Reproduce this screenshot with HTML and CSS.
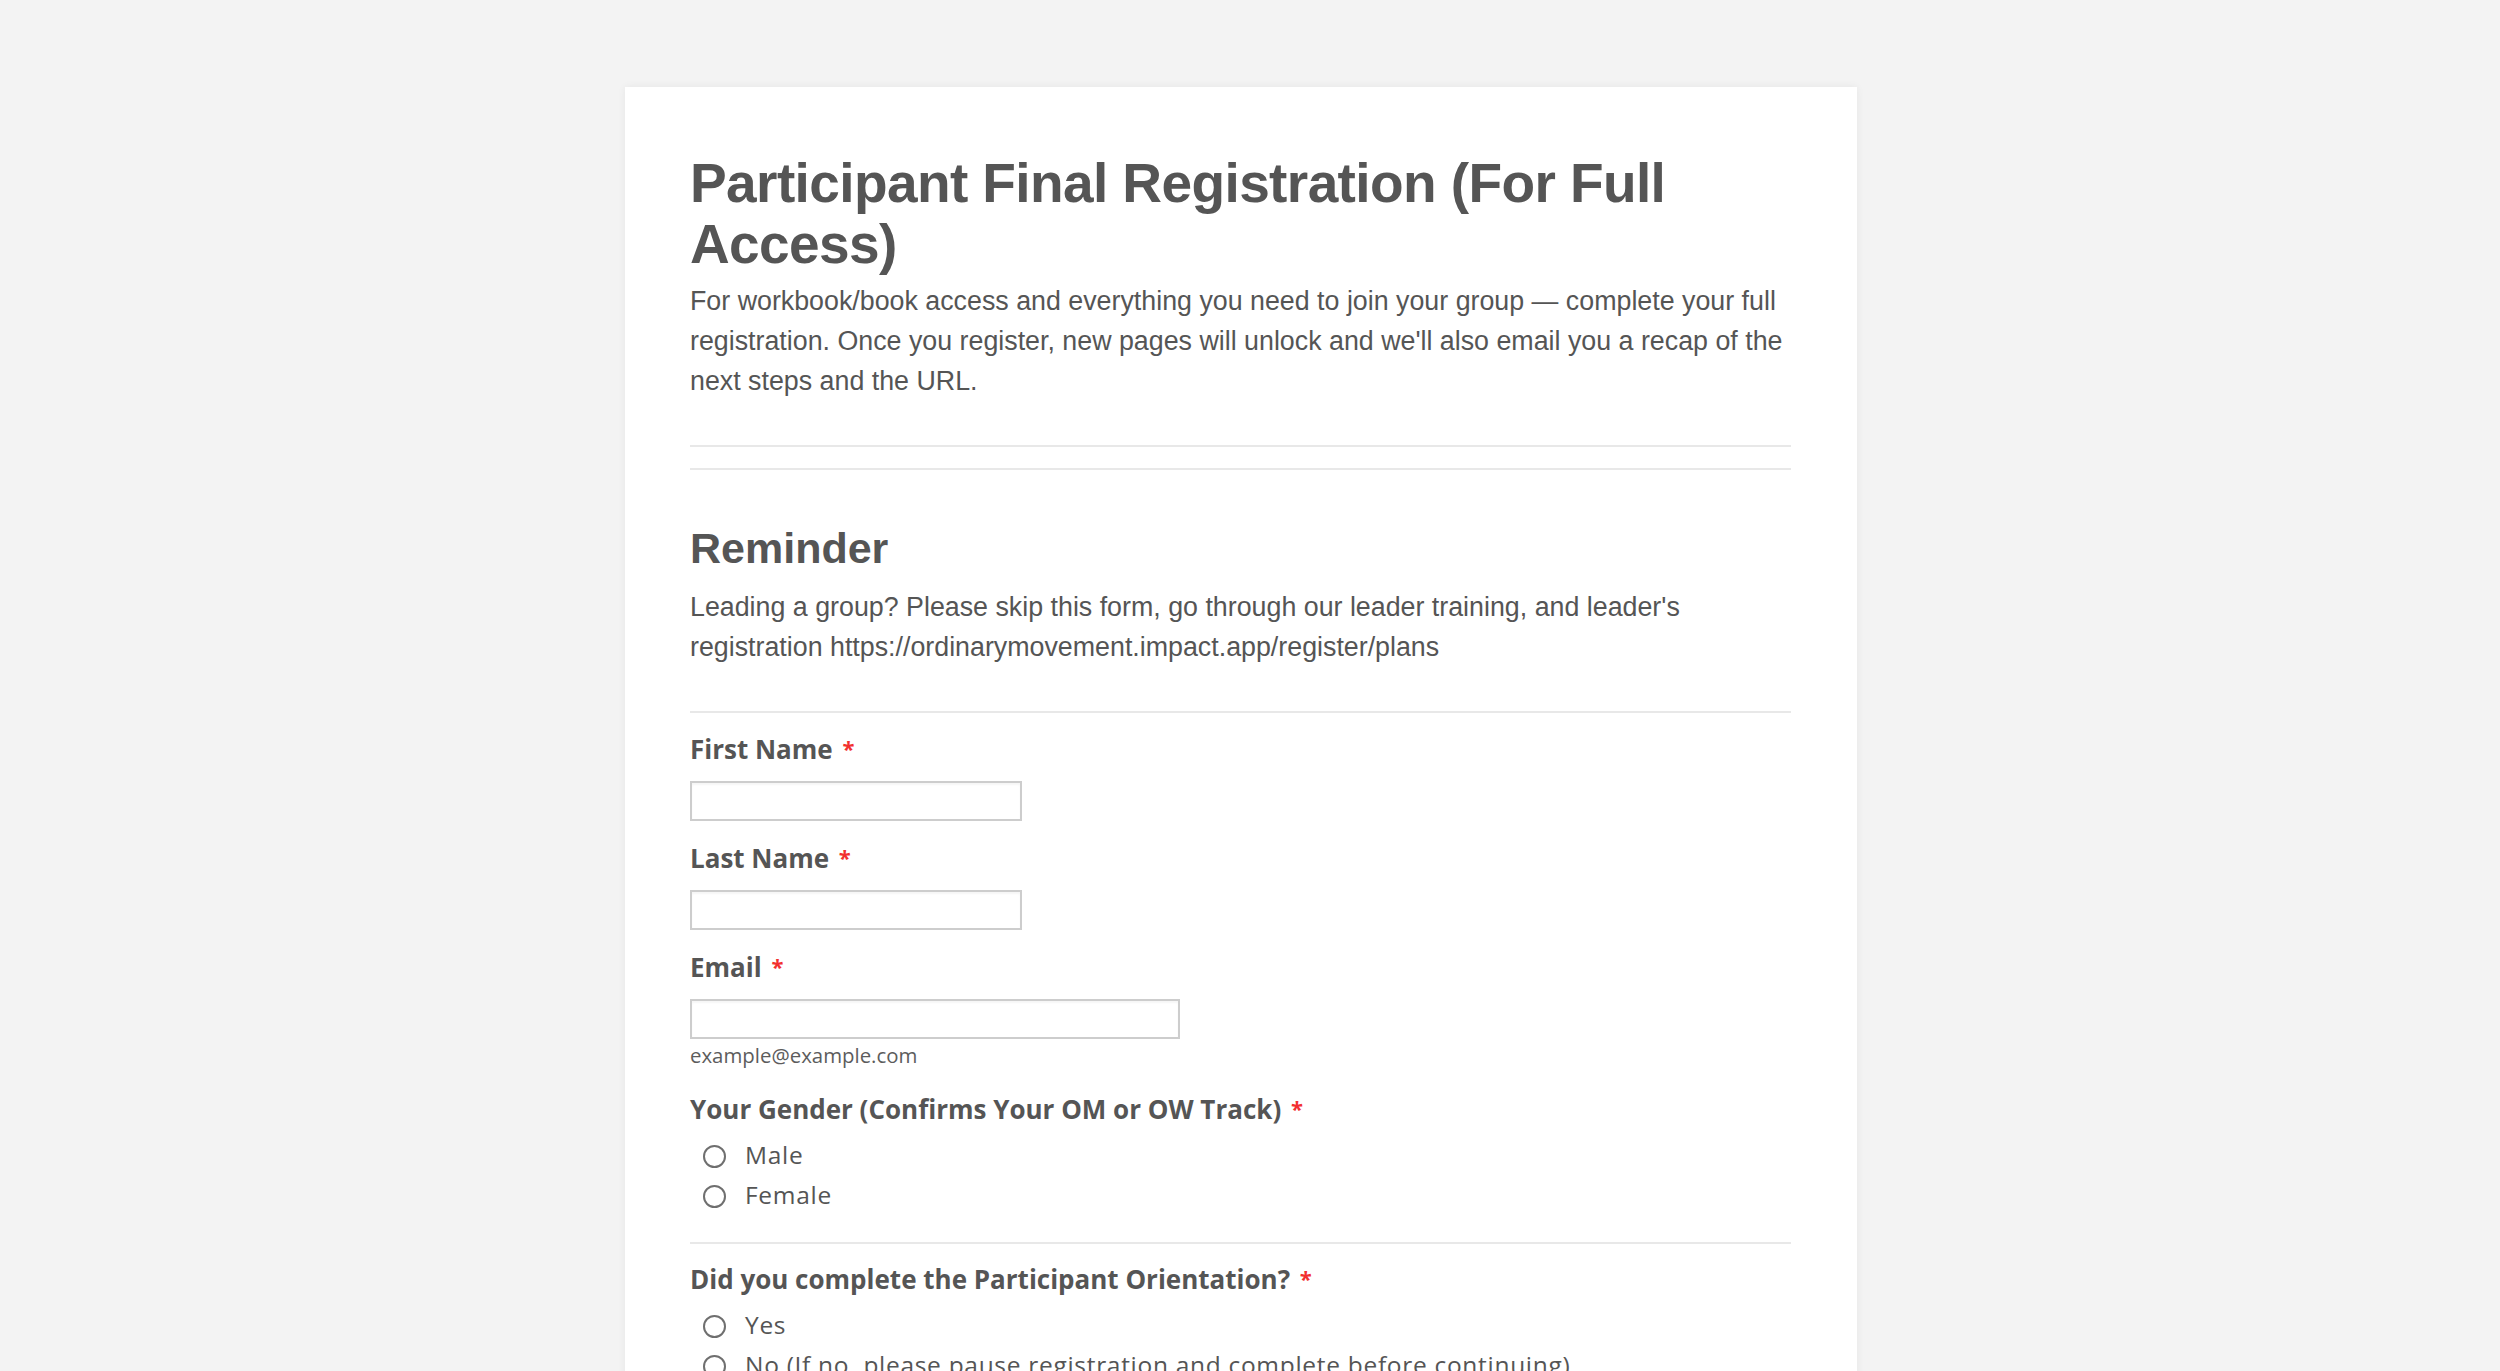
FILE: index.html
```html
<!DOCTYPE html>
<html lang="en">
<head>
<meta charset="utf-8">
<title>Participant Final Registration (For Full Access)</title>
<link rel="stylesheet" href="styles.css">
</head>
<body>
<form class="form-card">
  <header class="form-header">
    <h1 class="form-title">Participant Final Registration (For Full Access)</h1>
    <p class="form-desc">For workbook/book access and everything you need to join your group — complete your full registration. Once you register, new pages will unlock and we'll also email you a recap of the next steps and the URL.</p>
  </header>

  <section class="notice">
    <h2 class="notice-title">Reminder</h2>
    <p class="notice-text">Leading a group? Please skip this form, go through our leader training, and leader's registration https://ordinarymovement.impact.app/register/plans</p>
  </section>

  <div class="field">
    <label class="field-label" for="first">First Name <span class="req">*</span></label>
    <input class="text-input" id="first" type="text">
  </div>

  <div class="field">
    <label class="field-label" for="last">Last Name <span class="req">*</span></label>
    <input class="text-input" id="last" type="text">
  </div>

  <div class="field">
    <label class="field-label" for="email">Email <span class="req">*</span></label>
    <input class="text-input text-input-wide" id="email" type="email">
    <div class="hint">example@example.com</div>
  </div>

  <div class="field field-choice">
    <div class="field-label">Your Gender (Confirms Your OM or OW Track) <span class="req">*</span></div>
    <div class="options">
      <label class="option"><input class="radio" type="radio" name="gender"><span class="option-text">Male</span></label>
      <label class="option"><input class="radio" type="radio" name="gender"><span class="option-text">Female</span></label>
    </div>
  </div>

  <div class="field field-choice field-after-choice">
    <div class="field-label">Did you complete the Participant Orientation? <span class="req">*</span></div>
    <div class="options">
      <label class="option"><input class="radio" type="radio" name="orient"><span class="option-text">Yes</span></label>
      <label class="option"><input class="radio" type="radio" name="orient"><span class="option-text">No (If no, please pause registration and complete before continuing)</span></label>
    </div>
  </div>
</form>
</body>
</html>
```
FILE: styles.css
```css
html, body {
  margin: 0;
  padding: 0;
  background: #f3f3f3;
}

body {
  font-family: "Liberation Sans", Arial, sans-serif;
  color: #555555;
  overflow: hidden;
}

.form-card {
  box-sizing: border-box;
  width: 1232px;
  margin: 87px 0 0 625px;
  padding: 66px 66px 60px 65px;
  background: #ffffff;
  box-shadow: 0 0 8px rgba(0, 0, 0, 0.06);
  min-height: 1400px;
}

.form-header {
  padding-bottom: 44px;
  border-bottom: 2px solid #e8e8e8;
}

.form-title {
  margin: 0;
  font-family: "Liberation Sans", Arial, sans-serif;
  font-weight: 700;
  font-size: 55px;
  line-height: 61px;
  letter-spacing: -0.6px;
  color: #555555;
}

.form-desc {
  margin: 6px 0 0;
  font-size: 26.8px;
  line-height: 40px;
  color: #555555;
}

.notice {
  margin-top: 21px;
  padding: 52px 0 44px;
  border-top: 2px solid #e8e8e8;
  border-bottom: 2px solid #e8e8e8;
}

.notice-title {
  margin: 0;
  font-weight: 700;
  font-size: 43px;
  line-height: 52px;
  color: #555555;
}

.notice-text {
  margin: 13px 0 0;
  font-size: 26.8px;
  line-height: 40px;
  color: #555555;
}

.field {
  display: flex;
  flex-direction: column;
  align-items: flex-start;
  padding-top: 18px;
  font-family: "Open Sans", "Noto Sans", sans-serif;
}

.field-label {
  display: block;
  margin-bottom: 14px;
  font-weight: 700;
  font-size: 26px;
  line-height: 35px;
  color: #555555;
}

.req {
  color: #f2302f;
  font-size: 22px;
  font-weight: 700;
  vertical-align: 2px;
  margin-left: 3px;
}

.text-input {
  box-sizing: border-box;
  width: 332px;
  height: 40px;
  margin: 0 0 1px;
  padding: 0 8px;
  border: 2px solid #cdcdcd;
  border-radius: 0;
  background: #ffffff;
  box-shadow: inset 0 2px 2px rgba(0, 0, 0, 0.04);
  font-family: "Open Sans", sans-serif;
  font-size: 22px;
  color: #555555;
  outline: none;
}

.text-input-wide {
  width: 490px;
}

.hint {
  margin: 2px 0 5px;
  font-size: 20.4px;
  line-height: 26px;
  color: #5c5c5c;
}

.field-choice {
  padding-bottom: 27px;
  border-bottom: 2px solid #e8e8e8;
}

.field-after-choice {
  padding-top: 17px;
}

.field-choice .field-label {
  margin-bottom: 8px;
}

.options {
  display: flex;
  flex-direction: column;
}

.option {
  display: flex;
  align-items: flex-start;
  height: 40px;
  font-size: 24.5px;
  line-height: 40px;
  letter-spacing: 0.7px;
  color: #555555;
  cursor: pointer;
}

.radio {
  -webkit-appearance: none;
  appearance: none;
  box-sizing: border-box;
  flex: none;
  width: 23px;
  height: 23px;
  margin: 10px 19px 0 13px;
  border: 2px solid #6f6f6f;
  border-radius: 50%;
  background: #ffffff;
}

.option-text {
  white-space: nowrap;
}
```
